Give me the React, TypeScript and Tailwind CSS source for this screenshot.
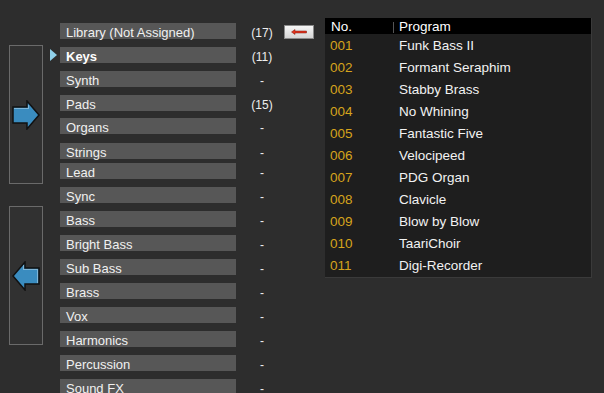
import React from 'react';

const categories: { name: string; count: string; mt: string; active?: boolean }[] = [
  { name: 'Library (Not Assigned)', count: '(17)', mt: 'mt-0' },
  { name: 'Keys', count: '(11)', mt: 'mt-[8px]', active: true },
  { name: 'Synth', count: '-', mt: 'mt-[8px]' },
  { name: 'Pads', count: '(15)', mt: 'mt-[8px]' },
  { name: 'Organs', count: '-', mt: 'mt-[7px]' },
  { name: 'Strings', count: '-', mt: 'mt-[9px]' },
  { name: 'Lead', count: '-', mt: 'mt-[4px]' },
  { name: 'Sync', count: '-', mt: 'mt-[8px]' },
  { name: 'Bass', count: '-', mt: 'mt-[8px]' },
  { name: 'Bright Bass', count: '-', mt: 'mt-[8px]' },
  { name: 'Sub Bass', count: '-', mt: 'mt-[8px]' },
  { name: 'Brass', count: '-', mt: 'mt-[8px]' },
  { name: 'Vox', count: '-', mt: 'mt-[8px]' },
  { name: 'Harmonics', count: '-', mt: 'mt-[8px]' },
  { name: 'Percussion', count: '-', mt: 'mt-[8px]' },
  { name: 'Sound FX', count: '-', mt: 'mt-[8px]' },
];

const programs = [
  'Funk Bass II',
  'Formant Seraphim',
  'Stabby Brass',
  'No Whining',
  'Fantastic Five',
  'Velocipeed',
  'PDG Organ',
  'Clavicle',
  'Blow by Blow',
  'TaariChoir',
  'Digi-Recorder',
];

const ArrowRight = () => (
  <svg width="28" height="30" viewBox="0 0 28 30">
    <path d="M1 7 H15 V1 L27 15 L15 29 V23 H1 Z" fill="#3a8cbf" stroke="#111" strokeWidth="1.5" />
    <path d="M2.5 8.5 H16.5 V4.5" fill="none" stroke="#e8f4fb" strokeWidth="0.8" strokeDasharray="1 1" />
  </svg>
);

const ArrowLeft = () => (
  <svg width="28" height="30" viewBox="0 0 28 30">
    <path d="M27 7 H13 V1 L1 15 L13 29 V23 H27 Z" fill="#3a8cbf" stroke="#111" strokeWidth="1.5" />
    <path d="M11.5 4.5 V8.5 H25.5 V21.5" fill="none" stroke="#e8f4fb" strokeWidth="0.8" strokeDasharray="1 1" />
  </svg>
);

const App: React.FC = () => {
  return (
    <div
      className="w-[604px] h-[393px] bg-[#2d2d2d] overflow-hidden flex items-start"
      style={{ fontFamily: '"Liberation Sans", Arial, sans-serif' }}
    >
      {/* transfer buttons */}
      <div className="ml-[9px] mt-[45px] w-[34px] flex flex-col gap-[22px]">
        <div className="h-[139px] border border-[#6a6a6a] bg-[#313131] flex items-center justify-center">
          <ArrowRight />
        </div>
        <div className="h-[139px] border border-[#6a6a6a] bg-[#313131] flex items-center justify-center">
          <ArrowLeft />
        </div>
      </div>

      {/* category list */}
      <div className="ml-[7px] mt-[23px] flex flex-col">
        {categories.map((c) => (
          <div key={c.name} className={`flex items-center h-[16px] ${c.mt}`}>
            <div className="w-[10px] flex items-center">
              {c.active && (
                <svg width="7" height="12" viewBox="0 0 7 12">
                  <path d="M0 0 L7 6 L0 12 Z" fill="#8fd0ea" />
                </svg>
              )}
            </div>
            <div
              className={`w-[176px] h-[16px] bg-[#575757] pl-[6px] pt-[3px] leading-[13px] text-[13px] text-[#f0f0f0] whitespace-nowrap ${
                c.active ? 'font-bold text-white' : ''
              }`}
            >
              {c.name}
            </div>
            <div className="w-[44px] ml-[4px] pt-[3px] text-center text-[12px] text-[#eeeeee]">
              {c.count}
            </div>
          </div>
        ))}
      </div>

      {/* move to library button */}
      <button className="mt-[25px] w-[30px] h-[14px] border border-[#8a8a8a] bg-gradient-to-b from-[#f6f6f6] to-[#d6d6d6] flex items-center justify-center">
        <svg width="16" height="6" viewBox="0 0 16 6">
          <path d="M0.5 3 L4 0.5 V2 H15.5 V4 H4 V5.5 Z" fill="#e2331c" stroke="#7a1a10" strokeWidth="0.5" />
        </svg>
      </button>

      {/* program table */}
      <div className="ml-[11px] mt-[18px] w-[267px] h-[260px] bg-[#1e1e1e] border-r border-b border-[#3a3a3a] flex flex-col">
        <div className="h-[16px] bg-black flex items-center pt-[2px] text-[13.5px] text-white">
          <div className="w-[68px] pl-[6px]">No.</div>
          <div className="w-px h-[11px] bg-[#555]" />
          <div className="pl-[5px]">Program</div>
        </div>
        {programs.map((p, i) => (
          <div key={p} className="h-[22px] flex items-center pt-[2px] text-[13.5px]">
            <div className="w-[74px] pl-[5px] text-[#d6a41c]">{String(i + 1).padStart(3, '0')}</div>
            <div className="text-[#f2f2f2]">{p}</div>
          </div>
        ))}
      </div>
    </div>
  );
};

export default App;
